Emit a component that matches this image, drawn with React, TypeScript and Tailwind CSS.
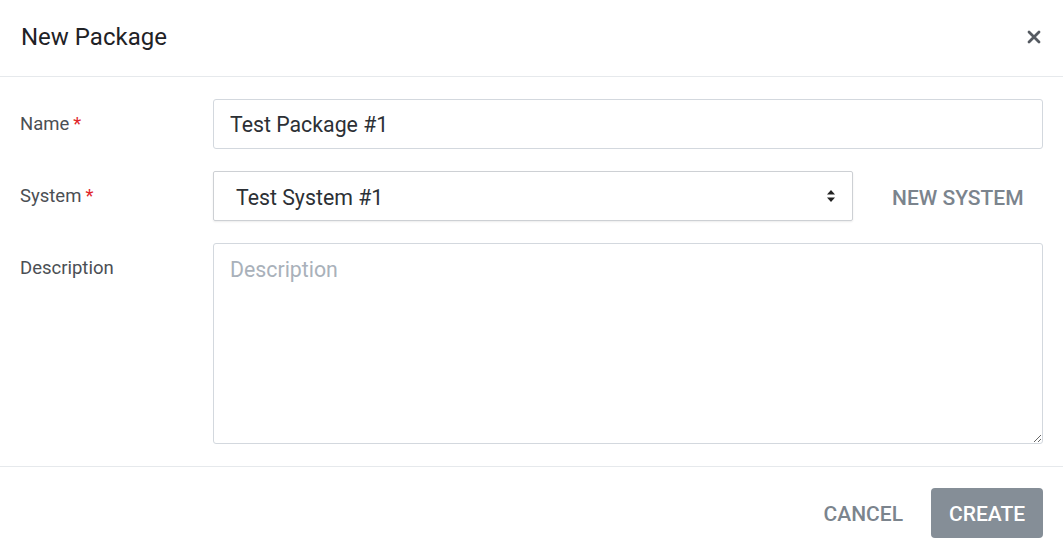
import React from "react";

const font = { fontFamily: "Roboto, 'Liberation Sans', sans-serif" };

function Label({ text, required }: { text: string; required?: boolean }) {
  return (
    <div className="w-[193px] shrink-0 pt-[13px] text-[18.5px] leading-6 text-[#4b4f54]">
      {text}
      {required && <span className="ml-1 text-[#e0262b]">*</span>}
    </div>
  );
}

export default function App() {
  return (
    <div
      className="w-[1063px] h-[559px] bg-white flex flex-col antialiased"
      style={font}
    >
      {/* header */}
      <div className="h-[77px] shrink-0 flex items-center justify-between pl-[21px] pr-[22px] border-b border-[#e6e9ec]">
        <h1 className="text-[24px] text-[#1f2226] font-normal -mt-[2px]">New Package</h1>
        <button className="text-[#555a61] -mt-[2px]">
          <svg width="14" height="14" viewBox="0 0 14 14">
            <path
              d="M2 2L12 12M12 2L2 12"
              stroke="currentColor"
              strokeWidth="2.8"
              strokeLinecap="round"
            />
          </svg>
        </button>
      </div>

      {/* body */}
      <div className="flex flex-col gap-[22px] pl-[20px] pr-[20px] pt-[22px] pb-[22px] border-b border-[#e6e9ec]">
        <div className="flex">
          <Label text="Name" required />
          <input
            className="flex-1 h-[50px] px-[16px] pt-[1px] border border-[#d3d8de] rounded-[3px] text-[21.3px] text-[#2c3035] outline-none"
            defaultValue="Test Package #1"
          />
        </div>

        <div className="flex">
          <Label text="System" required />
          <div className="w-[640px] h-[50px] flex items-center justify-between pl-[22px] pr-[16px] border border-[#cdd0d4] rounded-[2px] shadow-[0_1px_2px_rgba(0,0,0,0.08)] text-[21.3px] text-[#2c3035]">
            <span className="pt-[3px]">Test System #1</span>
            <svg width="10" height="14" viewBox="0 0 10 14" className="text-[#222]">
              <path d="M5 1L9 5.5H1Z" fill="currentColor" />
              <path d="M5 13L9 8.5H1Z" fill="currentColor" />
            </svg>
          </div>
          <button className="ml-[39px] pt-[5px] text-[21px] font-medium text-[#7b848d]">
            NEW SYSTEM
          </button>
        </div>

        <div className="flex">
          <Label text="Description" />
          <textarea
            className="flex-1 h-[201px] px-[16px] pt-[14px] border border-[#d3d8de] rounded-[3px] text-[21.3px] leading-6 placeholder:text-[#a9b1ba] outline-none"
            placeholder="Description"
          />
        </div>
      </div>

      {/* footer */}
      <div className="flex justify-end items-center gap-[28px] pt-[21px] pr-[20px]">
        <button className="pt-[4px] text-[21px] font-medium text-[#7b848d]">CANCEL</button>
        <button className="w-[112px] h-[50px] pt-[4px] rounded-[4px] bg-[#858e97] text-white text-[21px] font-medium">
          CREATE
        </button>
      </div>
    </div>
  );
}
